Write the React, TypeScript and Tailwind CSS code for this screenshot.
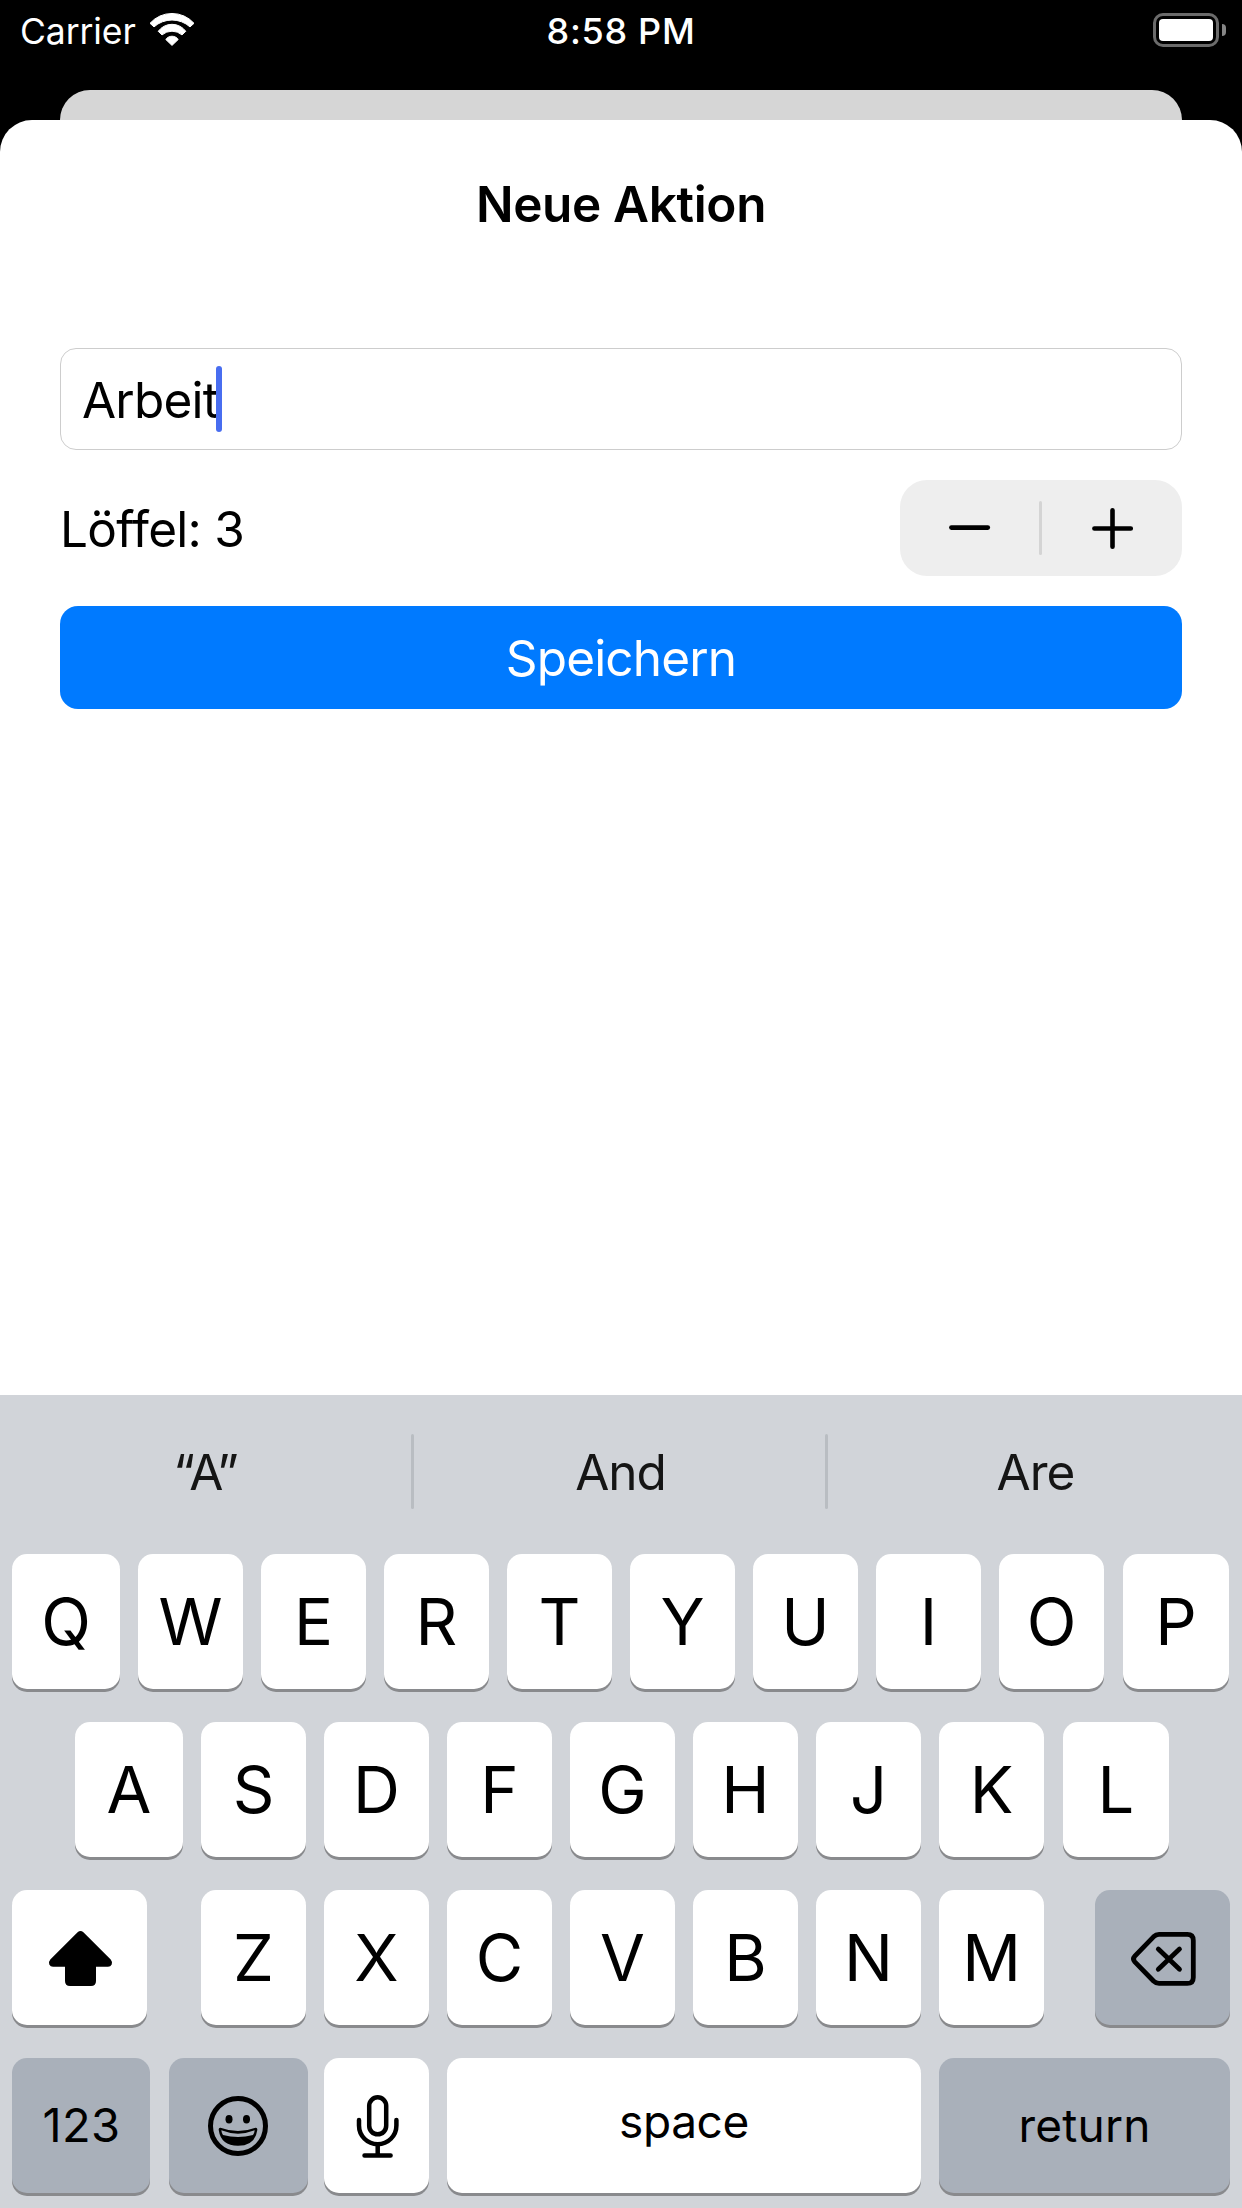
import type { ReactNode } from "react";

function WifiIcon() {
  return (
    <svg className="ml-[11px] h-[36px] w-[50px]" viewBox="147 12 50 36" fill="#fff" stroke="#fff" strokeWidth="1" strokeLinejoin="round">
      <path d="M150 23.3A29.5 29.5 0 0 1 194 23.3L190 26.9A27 27 0 0 0 154 26.9Z" />
      <path d="M158.2 31.3A17.1 17.1 0 0 1 185.8 31.3L182 34.9A15.3 15.3 0 0 0 162 34.9Z" />
      <path d="M165.8 39.5A7.5 7.5 0 0 1 178.2 39.5L172 45.4Z" />
    </svg>
  );
}

function Battery() {
  return (
    <div className="flex items-center">
      <div className="h-[34px] w-[66px] rounded-[10px] border-[3px] border-[#6b6b6b] p-[3px]">
        <div className="h-full w-full rounded-[4px] bg-white" />
      </div>
      <div className="ml-[3px] h-[12px] w-[4px] rounded-r-full bg-[#858585]" />
    </div>
  );
}

function ShiftIcon() {
  return (
    <svg className="h-[135px] w-[135px]" viewBox="0 0 135 135">
      <path d="M65.6 42.3Q68.5 39.8 71.4 42.3L98.7 69.5Q100.8 72 99.7 74.5Q98.6 76.7 96 76.7H84V91Q84 96 79 96H58Q53 96 53 91V76.7H41Q38.4 76.7 37.3 74.5Q36.2 72 38.3 69.5Z" />
    </svg>
  );
}

function DeleteIcon() {
  return (
    <svg className="h-[135px] w-[135px]" viewBox="0 0 135 135" fill="none" stroke="#000" strokeWidth="4.8" strokeLinecap="round" strokeLinejoin="round">
      <path d="M64 44.4H92.3Q98.3 44.4 98.3 50.4V87.4Q98.3 93.4 92.3 93.4H64Q61 93.4 58.5 91L39.8 71.8Q37.2 69 39.8 66.2L58.5 46.8Q61 44.4 64 44.4Z" />
      <path d="M63.3 59.1L84.5 79.3M84.5 59.1L63.3 79.3" />
    </svg>
  );
}

function EmojiIcon() {
  return (
    <svg className="h-[135px] w-[139px]" viewBox="0 0 139 135">
      <circle cx="69" cy="68" r="27.5" fill="none" stroke="#000" strokeWidth="5" />
      <ellipse cx="60" cy="61.3" rx="3.5" ry="4.2" />
      <ellipse cx="77.5" cy="61.3" rx="3.5" ry="4.2" />
      <path d="M51.5 69.7Q69 76.3 86.5 69.7Q88.6 69.4 88.3 72Q86 87.7 69 87.7Q52 87.7 49.7 72Q49.4 69.4 51.5 69.7Z" />
      <path d="M52.3 72.3Q69 79 85.7 72.3Q85.5 74.8 84 77Q69 81 54 77Q52.6 74.8 52.3 72.3Z" fill="#a9b0ba" />
    </svg>
  );
}

function MicIcon() {
  return (
    <svg className="h-[135px] w-[105px]" viewBox="0 0 105 135" fill="none" stroke="#000" strokeWidth="4.5" strokeLinecap="round">
      <rect x="45.2" y="39.3" width="17" height="37" rx="8.5" />
      <path d="M35 62V67.5A18.7 18.7 0 0 0 72.4 67.5V62M53.7 86.5V97M40.5 97.6H66.6" />
    </svg>
  );
}

function Key({ children, className = "w-[105px]", gray = false }: { children: ReactNode; className?: string; gray?: boolean }) {
  return (
    <div className={`flex h-[135px] shrink-0 items-center justify-center rounded-[15px] shadow-[0_3px_0_#898a8d] ${gray ? "bg-[#a9b0ba]" : "bg-white"} ${className}`}>
      {children}
    </div>
  );
}

function Letters({ keys, wideEnds = false }: { keys: string; wideEnds?: boolean }) {
  const all = keys.split("");
  return (
    <>
      {all.map((k, i) => (
        <Key key={k} className={wideEnds && i === 0 ? "w-[108px]" : wideEnds && i === all.length - 1 ? "ml-px w-[106px]" : "w-[105px]"}>
          {k}
        </Key>
      ))}
    </>
  );
}

export default function App() {
  return (
    <div className="flex h-[2208px] w-[1242px] flex-col overflow-hidden bg-black font-['Inter',sans-serif] text-black">
      <header className="grid h-[90px] grid-cols-3 items-start text-[36px] leading-[62px] text-white">
        <div className="flex h-[60px] items-center pl-[20px]">
          <span className="pt-[3px] text-[35.5px] tracking-[-0.1px]">Carrier</span>
          <WifiIcon />
        </div>
        <div className="text-center font-medium tracking-[0.7px]">8:58 PM</div>
        <div className="flex h-[60px] items-center justify-end pr-[16px]">
          <Battery />
        </div>
      </header>

      <div className="mx-[60px] -mb-[60px] h-[90px] shrink-0 rounded-t-[30px] bg-[#d6d6d6]" />

      <main className="relative flex flex-1 flex-col rounded-t-[32px] bg-white px-[60px]">
        <h1 className="mt-[54px] text-center text-[49.5px] leading-[60px] font-semibold tracking-[-0.34px]">Neue Aktion</h1>

        <div className="mt-[114px] flex h-[102px] items-center rounded-[16px] border border-[#cdcdcd] pl-[21px]">
          <span className="pt-[2px] text-[49.5px] leading-[60px] tracking-[-0.8px]">Arbeit</span>
          <span className="z-10 -ml-[2px] h-[66px] w-[6px] rounded-full bg-[#486df0]" />
        </div>

        <div className="mt-[30px] flex h-[96px] items-center justify-between">
          <span className="pt-[2px] text-[49.5px] leading-[60px] tracking-[-0.7px]">Löffel: 3</span>
          <div className="flex h-[96px] w-[282px] items-center rounded-[27px] bg-[#eeeeee]">
            <svg className="h-[96px] w-[139px]" viewBox="0 0 139 96" stroke="#000" strokeWidth="4.6" strokeLinecap="round">
              <path d="M51.4 47.6H87.8" />
            </svg>
            <div className="h-[54px] w-[3px] rounded-full bg-[#d4d4d4]" />
            <svg className="h-[96px] w-[140px]" viewBox="0 0 140 96" stroke="#000" strokeWidth="4.6" strokeLinecap="round">
              <path d="M52.4 48.5H88.8M70.5 30.3V66.7" />
            </svg>
          </div>
        </div>

        <button className="mt-[30px] flex h-[103px] items-center justify-center rounded-[18px] bg-[#007aff] text-[49.5px] leading-[60px] tracking-[-0.85px] text-white">
          Speichern
        </button>
      </main>

      <section className="h-[813px] shrink-0 bg-[#d1d4d9] text-[65px] leading-none">
        <div className="flex h-[159px] items-center pb-[6px] text-[49.5px] tracking-[-1px] text-[#151515]">
          <div className="w-[411px] pt-[2px] text-center tracking-[-1.2px]">“A”</div>
          <div className="h-[75px] w-[3px] rounded-full bg-[#b9bdc2]" />
          <div className="w-[411px] pt-[2px] pl-[2px] text-center">And</div>
          <div className="h-[75px] w-[3px] rounded-full bg-[#b9bdc2]" />
          <div className="w-[414px] pt-[2px] pl-px text-center">Are</div>
        </div>

        <div className="flex flex-col gap-[33px]">
          <div className="flex gap-[18px] pl-[12px]">
            <Letters keys="QWERTYUIOP" wideEnds />
          </div>
          <div className="flex gap-[18px] pl-[75px]">
            <Letters keys="ASDFGHJKL" wideEnds />
          </div>
          <div className="flex pl-[12px]">
            <Key className="mr-[54px] w-[135px]"><ShiftIcon /></Key>
            <div className="flex gap-[18px]">
              <Letters keys="ZXCVBNM" />
            </div>
            <Key className="ml-[51px] w-[135px]" gray><DeleteIcon /></Key>
          </div>
          <div className="flex pl-[12px]">
            <Key className="w-[138px] pb-[2px] pl-px text-[47px] tracking-[0.4px]" gray>123</Key>
            <Key className="ml-[19px] w-[139px]" gray><EmojiIcon /></Key>
            <Key className="ml-[16px] w-[105px]"><MicIcon /></Key>
            <Key className="ml-[18px] w-[474px] pb-[10px] text-[46px] tracking-[-0.4px]">space</Key>
            <Key className="ml-[18px] w-[291px] pb-[2px] text-[46px] tracking-[0.2px]" gray>return</Key>
          </div>
        </div>
      </section>
    </div>
  );
}
